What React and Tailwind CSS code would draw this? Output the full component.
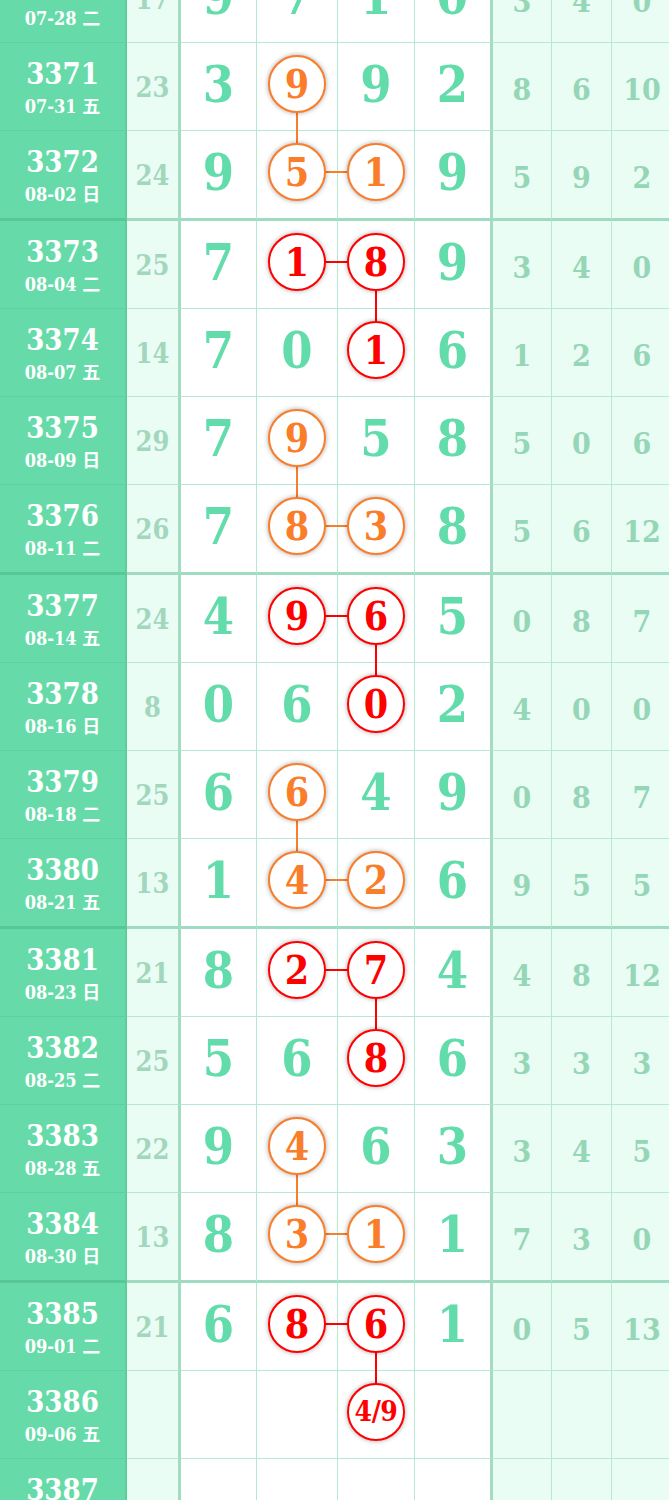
import React from 'react';

const rows = [
  { no: '3370', date: '07-28 二', sum: '17', main: ['9', '7', '1', '0'], tail: ['3', '4', '0'], marks: [] },
  { no: '3371', date: '07-31 五', sum: '23', main: ['3', '9', '9', '2'], tail: ['8', '6', '10'], marks: [{ i: 1, c: 'o', down: true }] },
  { no: '3372', date: '08-02 日', sum: '24', main: ['9', '5', '1', '9'], tail: ['5', '9', '2'], marks: [{ i: 1, c: 'o', right: true }, { i: 2, c: 'o' }], end: true },
  { no: '3373', date: '08-04 二', sum: '25', main: ['7', '1', '8', '9'], tail: ['3', '4', '0'], marks: [{ i: 1, c: 'r', right: true }, { i: 2, c: 'r', down: true }] },
  { no: '3374', date: '08-07 五', sum: '14', main: ['7', '0', '1', '6'], tail: ['1', '2', '6'], marks: [{ i: 2, c: 'r' }] },
  { no: '3375', date: '08-09 日', sum: '29', main: ['7', '9', '5', '8'], tail: ['5', '0', '6'], marks: [{ i: 1, c: 'o', down: true }] },
  { no: '3376', date: '08-11 二', sum: '26', main: ['7', '8', '3', '8'], tail: ['5', '6', '12'], marks: [{ i: 1, c: 'o', right: true }, { i: 2, c: 'o' }], end: true },
  { no: '3377', date: '08-14 五', sum: '24', main: ['4', '9', '6', '5'], tail: ['0', '8', '7'], marks: [{ i: 1, c: 'r', right: true }, { i: 2, c: 'r', down: true }] },
  { no: '3378', date: '08-16 日', sum: '8', main: ['0', '6', '0', '2'], tail: ['4', '0', '0'], marks: [{ i: 2, c: 'r' }] },
  { no: '3379', date: '08-18 二', sum: '25', main: ['6', '6', '4', '9'], tail: ['0', '8', '7'], marks: [{ i: 1, c: 'o', down: true }] },
  { no: '3380', date: '08-21 五', sum: '13', main: ['1', '4', '2', '6'], tail: ['9', '5', '5'], marks: [{ i: 1, c: 'o', right: true }, { i: 2, c: 'o' }], end: true },
  { no: '3381', date: '08-23 日', sum: '21', main: ['8', '2', '7', '4'], tail: ['4', '8', '12'], marks: [{ i: 1, c: 'r', right: true }, { i: 2, c: 'r', down: true }] },
  { no: '3382', date: '08-25 二', sum: '25', main: ['5', '6', '8', '6'], tail: ['3', '3', '3'], marks: [{ i: 2, c: 'r' }] },
  { no: '3383', date: '08-28 五', sum: '22', main: ['9', '4', '6', '3'], tail: ['3', '4', '5'], marks: [{ i: 1, c: 'o', down: true }] },
  { no: '3384', date: '08-30 日', sum: '13', main: ['8', '3', '1', '1'], tail: ['7', '3', '0'], marks: [{ i: 1, c: 'o', right: true }, { i: 2, c: 'o' }], end: true },
  { no: '3385', date: '09-01 二', sum: '21', main: ['6', '8', '6', '1'], tail: ['0', '5', '13'], marks: [{ i: 1, c: 'r', right: true }, { i: 2, c: 'r', down: true }] },
  { no: '3386', date: '09-06 五', sum: '', main: ['', '', '4/9', ''], tail: ['', '', ''], marks: [{ i: 2, c: 'r', small: true }] },
  { no: '3387', date: '09-08 日', sum: '', main: ['', '', '', ''], tail: ['', '', ''], marks: [] },
];

const mainWidths = ['w-[76px]', 'w-[81px]', 'w-[77px]', 'w-[78px]'];
const tailWidths = ['w-[59px]', 'w-[60px]', 'w-[60px]'];

const Ball = ({ value, mark }) => {
  const red = mark.c === 'r';
  return (
    <>
      {mark.down && (
        <div className={`absolute left-1/2 top-[41px] z-[5] h-[90px] w-[2px] -translate-x-1/2 ${red ? 'bg-[#ff0000]' : 'bg-[#fa7d2a]'}`} />
      )}
      {mark.right && (
        <div className={`absolute left-1/2 top-[40px] z-[5] h-[2px] w-[82px] ${red ? 'bg-[#ff0000]' : 'bg-[#fa7d2a]'}`} />
      )}
      <div
        className={`relative z-10 mt-[2px] flex h-[58px] w-[58px] items-center justify-center rounded-full border-2 bg-white shadow-[0_0_5px_rgba(0,0,0,0.35)] ${
          red ? 'border-[#ff0000] text-[#ff0000]' : 'border-[#fa7d2a] text-[#fa7d2a]'
        } ${mark.small ? 'text-[28px] tracking-[-0.5px]' : 'text-[39px]'}`}
      >
        <span className="leading-none">{value}</span>
      </div>
    </>
  );
};

const Row = ({ row }) => {
  const h = row.end ? 'h-[90px] border-b-[3px]' : 'h-[88px] border-b';
  const line = row.end ? 'border-b-[#9fdbc1]' : 'border-b-[#b6e8d2]';
  return (
    <div className="flex">
      <div className={`flex w-[127px] shrink-0 flex-col items-center border-r-2 border-r-[#5ccd9c] bg-[#66dba9] pt-[16px] text-white ${h} ${row.end ? 'border-b-[#58c796]' : 'border-b-[#5fd09f]'}`}>
        <div className="text-[29px] leading-[30px]">{row.no}</div>
        <div className="mt-[7px] text-[18px] leading-[22px]">{row.date}</div>
      </div>
      <div className={`flex w-[54px] shrink-0 items-center justify-center border-r-[3px] border-r-[#a3dcc3] bg-[#e9fdf4] pt-[3px] text-[27px] text-[#a2d7bd] ${h} ${line}`}>
        {row.sum}
      </div>
      {row.main.map((v, i) => {
        const mark = row.marks.find((m) => m.i === i);
        return (
          <div
            key={i}
            className={`relative flex shrink-0 items-start justify-center bg-white pt-[10px] ${mainWidths[i]} ${h} ${line} ${
              i === 3 ? 'border-r-[3px] border-r-[#a3dcc3]' : 'border-r border-r-[#b6e8d2]'
            }`}
          >
            {mark ? (
              <Ball value={v} mark={mark} />
            ) : (
              <span className="text-[50px] leading-[64px] text-[#62dcaa]">{v}</span>
            )}
          </div>
        );
      })}
      {row.tail.map((v, i) => (
        <div
          key={i}
          className={`flex shrink-0 items-center justify-center bg-[#e9fdf4] pt-[6px] text-[30px] text-[#95d6b7] ${tailWidths[i]} ${h} ${line} ${
            i < 2 ? 'border-r border-r-[#b6e8d2]' : ''
          }`}
        >
          {v}
        </div>
      ))}
    </div>
  );
};

export default function App() {
  return (
    <div
      className="h-[1500px] w-[669px] overflow-hidden bg-white font-bold"
      style={{ fontFamily: "'DejaVu Serif Condensed', 'DejaVu Serif', 'Noto Sans CJK SC', serif" }}
    >
      <div className="-mt-[45px]">
        {rows.map((row) => (
          <Row key={row.no} row={row} />
        ))}
      </div>
    </div>
  );
}
